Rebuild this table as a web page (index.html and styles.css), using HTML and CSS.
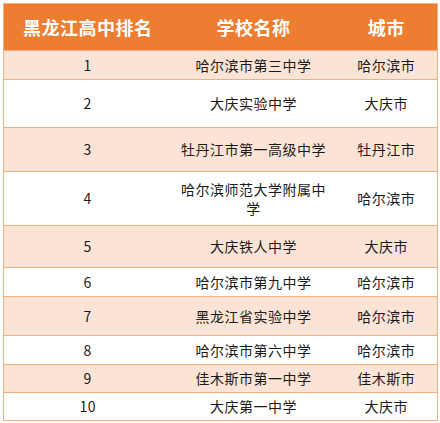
FILE: index.html
```html
<!DOCTYPE html>
<html lang="zh">
<head>
<meta charset="utf-8">
<link rel="stylesheet" href="styles.css">
</head>
<body>
<table class="rank-table">
  <colgroup>
    <col class="c1"><col class="c2"><col class="c3">
  </colgroup>
  <thead>
    <tr class="head"><th>黑龙江高中排名</th><th>学校名称</th><th>城市</th></tr>
  </thead>
  <tbody>
    <tr class="odd h29"><td>1</td><td>哈尔滨市第三中学</td><td>哈尔滨市</td></tr>
    <tr class="even h48"><td>2</td><td>大庆实验中学</td><td>大庆市</td></tr>
    <tr class="odd h44"><td>3</td><td>牡丹江市第一高级中学</td><td>牡丹江市</td></tr>
    <tr class="even h54"><td>4</td><td>哈尔滨师范大学附属中学</td><td>哈尔滨市</td></tr>
    <tr class="odd h42"><td>5</td><td>大庆铁人中学</td><td>大庆市</td></tr>
    <tr class="even h29"><td>6</td><td>哈尔滨市第九中学</td><td>哈尔滨市</td></tr>
    <tr class="odd h39"><td>7</td><td>黑龙江省实验中学</td><td>哈尔滨市</td></tr>
    <tr class="even h29"><td>8</td><td>哈尔滨市第六中学</td><td>哈尔滨市</td></tr>
    <tr class="odd h28"><td>9</td><td>佳木斯市第一中学</td><td>佳木斯市</td></tr>
    <tr class="even h28"><td>10</td><td>大庆第一中学</td><td>大庆市</td></tr>
  </tbody>
</table>
</body>
</html>
```
FILE: styles.css
```css
html, body {
  margin: 0;
  padding: 0;
  background: #ffffff;
}
body {
  padding: 3px 0 0 3px;
  font-family: "Noto Sans CJK SC", "Liberation Sans", sans-serif;
}
.rank-table {
  border-collapse: collapse;
  width: 434px;
  table-layout: fixed;
  border: 1px solid #f4b084;
}
.c1 { width: 168px; }
.c2 { width: 164px; }
.c3 { width: 102px; }
.rank-table th,
.rank-table td {
  padding: 0 6px;
  text-align: center;
  vertical-align: middle;
  box-sizing: border-box;
}
.head th {
  background: #ed7d31;
  color: #ffffff;
  font-size: 18px;
  font-weight: bold;
  height: 47px;
  border-bottom: 1px solid #f4b084;
  letter-spacing: 0.5px;
}
.rank-table td {
  font-size: 14px;
  line-height: 19px;
  color: #1a1a1a;
  letter-spacing: 0.5px;
  border-bottom: 1px solid #f4b084;
}
.odd td { background: #fbe4d5; }
.even td { background: #ffffff; }
.h28 td { height: 28px; }
.h29 td { height: 29px; }
.h39 td { height: 39px; }
.h42 td { height: 42px; }
.h44 td { height: 44px; }
.h48 td { height: 48px; }
.h54 td { height: 54px; }
```
